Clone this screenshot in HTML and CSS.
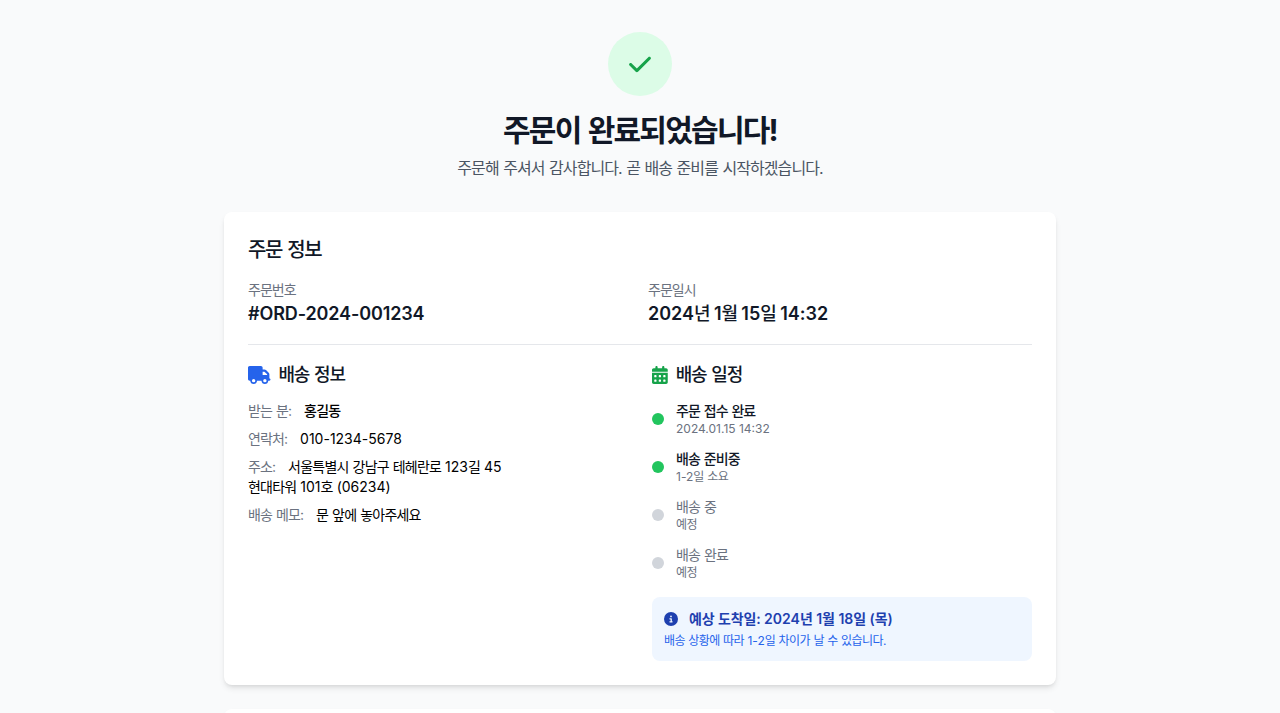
FILE: index.html
```html
<!DOCTYPE html>
<html lang="ko">
<head>
    <meta charset="UTF-8">
    <meta name="viewport" content="width=device-width, initial-scale=1.0">
    <title>주문 완료</title>
    <link rel="stylesheet" href="styles.css">
</head>
<body>

    <div class="container">
        <!-- 상단 완료 메시지 -->
        <div class="header">
            <div class="check-circle">
                <svg class="check-icon" viewBox="0 0 448 512"><path d="M438.6 105.4c12.5 12.5 12.5 32.8 0 45.3l-256 256c-12.5 12.5-32.8 12.5-45.3 0l-128-128c-12.5-12.5-12.5-32.8 0-45.3s32.8-12.5 45.3 0L160 338.7 393.4 105.4c12.5-12.5 32.8-12.5 45.3 0z"/></svg>
            </div>
            <h1>주문이 완료되었습니다!</h1>
            <p>주문해 주셔서 감사합니다. 곧 배송 준비를 시작하겠습니다.</p>
        </div>

        <!-- 주문 정보 -->
        <div class="card">
            <h2>주문 정보</h2>
            <div class="order-grid">
                <div>
                    <div class="order-label">주문번호</div>
                    <div class="order-value order-no">#ORD-2024-001234</div>
                </div>
                <div>
                    <div class="order-label">주문일시</div>
                    <div class="order-value"><span class="lat">2024</span>년 <span class="lat">1</span>월 <span class="lat">15</span>일 <span class="lat">14:32</span></div>
                </div>
            </div>

            <div class="detail-grid">
                <!-- 배송 정보 -->
                <div>
                    <h3>
                        <svg class="section-icon blue" viewBox="0 0 640 512"><path d="M48 0C21.5 0 0 21.5 0 48V368c0 26.5 21.5 48 48 48H64c0 53 43 96 96 96s96-43 96-96H384c0 53 43 96 96 96s96-43 96-96h32c17.7 0 32-14.3 32-32s-14.3-32-32-32V288 256 237.3c0-17-6.7-33.3-18.7-45.3L512 114.7c-12-12-28.3-18.7-45.3-18.7H416V48c0-26.5-21.5-48-48-48H48zM416 160h50.7L544 237.3V256H416V160zM112 416a48 48 0 1 1 96 0 48 48 0 1 1 -96 0zm368-48a48 48 0 1 1 0 96 48 48 0 1 1 0-96z"/></svg>
                        <span>배송 정보</span>
                    </h3>
                    <div class="ship-info">
                        <p><span class="ship-label">받는 분:</span> <span class="name">홍길동</span></p>
                        <p><span class="ship-label">연락처:</span> <span class="lat">010-1234-5678</span></p>
                        <p><span class="ship-label">주소:</span> 서울특별시 강남구 테헤란로 <span class="lat">123</span>길 <span class="lat">45</span><br>현대타워 <span class="lat">101</span>호 <span class="lat">(06234)</span></p>
                        <p><span class="ship-label">배송 메모:</span> 문 앞에 놓아주세요</p>
                    </div>
                </div>

                <!-- 배송 일정 -->
                <div>
                    <h3>
                        <svg class="section-icon green" viewBox="0 0 448 512"><path d="M128 0c17.7 0 32 14.3 32 32V64H288V32c0-17.7 14.3-32 32-32s32 14.3 32 32V64h48c26.5 0 48 21.5 48 48v48H0V112C0 85.5 21.5 64 48 64H96V32c0-17.7 14.3-32 32-32zM0 192H448V464c0 26.5-21.5 48-48 48H48c-26.5 0-48-21.5-48-48V192zm64 80v32c0 8.8 7.2 16 16 16h32c8.8 0 16-7.2 16-16V272c0-8.8-7.2-16-16-16H80c-8.8 0-16 7.2-16 16zm128 0v32c0 8.8 7.2 16 16 16h32c8.8 0 16-7.2 16-16V272c0-8.8-7.2-16-16-16H208c-8.8 0-16 7.2-16 16zm144-16c-8.8 0-16 7.2-16 16v32c0 8.8 7.2 16 16 16h32c8.8 0 16-7.2 16-16V272c0-8.8-7.2-16-16-16H336zM64 400v32c0 8.8 7.2 16 16 16h32c8.8 0 16-7.2 16-16V400c0-8.8-7.2-16-16-16H80c-8.8 0-16 7.2-16 16zm144-16c-8.8 0-16 7.2-16 16v32c0 8.8 7.2 16 16 16h32c8.8 0 16-7.2 16-16V400c0-8.8-7.2-16-16-16H208zm112 16v32c0 8.8 7.2 16 16 16h32c8.8 0 16-7.2 16-16V400c0-8.8-7.2-16-16-16H336c-8.8 0-16 7.2-16 16z"/></svg>
                        <span>배송 일정</span>
                    </h3>
                    <div class="timeline">
                        <div class="step done">
                            <span class="dot"></span>
                            <div>
                                <div class="step-title">주문 접수 완료</div>
                                <div class="step-sub"><span class="lat">2024.01.15 14:32</span></div>
                            </div>
                        </div>
                        <div class="step done">
                            <span class="dot"></span>
                            <div>
                                <div class="step-title">배송 준비중</div>
                                <div class="step-sub"><span class="lat">1-2</span>일 소요</div>
                            </div>
                        </div>
                        <div class="step">
                            <span class="dot"></span>
                            <div>
                                <div class="step-title">배송 중</div>
                                <div class="step-sub">예정</div>
                            </div>
                        </div>
                        <div class="step">
                            <span class="dot"></span>
                            <div>
                                <div class="step-title">배송 완료</div>
                                <div class="step-sub">예정</div>
                            </div>
                        </div>
                    </div>
                    <div class="notice">
                        <div class="notice-title">
                            <svg class="notice-icon" viewBox="0 0 512 512"><path d="M256 512A256 256 0 1 0 256 0a256 256 0 1 0 0 512zM216 336h24V272H216c-13.3 0-24-10.7-24-24s10.7-24 24-24h48c13.3 0 24 10.7 24 24v88h8c13.3 0 24 10.7 24 24s-10.7 24-24 24H216c-13.3 0-24-10.7-24-24s10.7-24 24-24zm40-208a32 32 0 1 1 0 64 32 32 0 1 1 0-64z"/></svg>
                            <span>예상 도착일: <span class="lat">2024</span>년 <span class="lat">1</span>월 <span class="lat">18</span>일 <span class="lat">(</span>목<span class="lat">)</span></span>
                        </div>
                        <div class="notice-sub">배송 상황에 따라 <span class="lat">1-2</span>일 차이가 날 수 있습니다.</div>
                    </div>
                </div>
            </div>
        </div>

        <!-- 다음 카드 (화면 아래로 잘림) -->
        <div class="card next-card"></div>
    </div>

</body>
</html>
```

FILE: styles.css
```css
* {
    margin: 0;
    padding: 0;
    box-sizing: border-box;
}

html, body {
    height: 100vh;
    overflow: hidden;
}

/* 한글 글자폭을 좁게 맞춤, 숫자/영문은 .lat 로 되돌림 */
body {
    font-family: Inter, "Noto Sans CJK KR", sans-serif;
    background-color: #f9fafb;
    color: #000;
    letter-spacing: -1px;
    word-spacing: 1px;
}

.container {
    width: 896px;
    margin: 0 auto;
    padding: 32px;
}

.header {
    text-align: center;
    margin-bottom: 32px;
}

.check-circle {
    width: 64px;
    height: 64px;
    border-radius: 50%;
    background-color: #dcfce7;
    margin: 0 auto 16px;
    display: flex;
    align-items: center;
    justify-content: center;
}

.check-icon {
    width: 22px;
    height: 25px;
    fill: #16a34a;
}

.header h1 {
    font-size: 30px;
    line-height: 36px;
    font-weight: 700;
    color: #111827;
    letter-spacing: -1.75px;
    word-spacing: 1.75px;
    margin-bottom: 8px;
}

.header p {
    font-size: 16px;
    line-height: 24px;
    color: #4b5563;
    letter-spacing: -0.93px;
    word-spacing: 0.93px;
}

.card {
    background-color: #ffffff;
    border-radius: 8px;
    box-shadow: 0 4px 6px -1px rgba(0, 0, 0, 0.1), 0 2px 4px -2px rgba(0, 0, 0, 0.1);
    padding: 24px;
    margin-bottom: 24px;
}

.next-card {
    height: 200px;
}

.card h2 {
    font-size: 20px;
    line-height: 28px;
    font-weight: 500;
    color: #111827;
    letter-spacing: -1.4px;
    word-spacing: 1.4px;
    margin-bottom: 16px;
}

.order-grid {
    display: grid;
    grid-template-columns: 1fr 1fr;
    gap: 16px;
    padding-bottom: 16px;
    border-bottom: 1px solid #e5e7eb;
    margin-bottom: 16px;
}

.order-label {
    font-size: 14px;
    line-height: 20px;
    color: #6b7280;
}

.order-value {
    font-size: 18px;
    line-height: 28px;
    font-weight: 500;
    color: #111827;
    letter-spacing: -1.5px;
    word-spacing: 1.5px;
}

.order-value .lat {
    font-weight: 600;
}

.order-value.order-no {
    font-weight: 600;
    letter-spacing: -0.13px;
}

.detail-grid {
    display: grid;
    grid-template-columns: 1fr 1fr;
    gap: 24px;
}

.card h3 {
    display: flex;
    align-items: center;
    font-size: 18px;
    line-height: 28px;
    font-weight: 500;
    color: #111827;
    letter-spacing: -1.2px;
    word-spacing: 1.2px;
    margin-bottom: 12px;
}

.section-icon {
    height: 18px;
    margin-right: 8px;
}

.section-icon.blue {
    width: 22.5px;
    fill: #2563eb;
}

.section-icon.green {
    width: 15.75px;
    fill: #16a34a;
}

.ship-info p {
    font-size: 14px;
    line-height: 20px;
    margin-bottom: 8px;
    letter-spacing: -0.78px;
    word-spacing: 0.78px;
}

.ship-label {
    color: #6b7280;
    margin-right: 9px;
    letter-spacing: -0.88px;
    word-spacing: 0.88px;
}

.name {
    font-weight: 500;
}

.step {
    display: flex;
    align-items: center;
    margin-bottom: 12px;
}

.step:last-child {
    margin-bottom: 0;
}

.dot {
    width: 12px;
    height: 12px;
    border-radius: 50%;
    background-color: #d1d5db;
    margin-right: 12px;
    flex-shrink: 0;
}

.step.done .dot {
    background-color: #22c55e;
}

.step-title {
    font-size: 14px;
    line-height: 20px;
    color: #6b7280;
    letter-spacing: -0.9px;
    word-spacing: 0.9px;
}

.step.done .step-title {
    font-weight: 500;
    color: #111827;
}

.step-sub {
    font-size: 12px;
    line-height: 16px;
    color: #6b7280;
    letter-spacing: -0.48px;
    word-spacing: 0.48px;
}

.notice {
    background-color: #eff6ff;
    border-radius: 8px;
    padding: 12px;
    margin-top: 16px;
}

.notice-title {
    display: flex;
    align-items: center;
    font-size: 14px;
    line-height: 20px;
    font-weight: 600;
    color: #1e40af;
    letter-spacing: -0.14px;
    word-spacing: 0.14px;
}

.notice-icon {
    width: 14px;
    height: 14px;
    fill: #1e40af;
    margin-right: 11px;
}

.notice-sub {
    font-size: 12px;
    line-height: 16px;
    color: #2563eb;
    margin-top: 4px;
    letter-spacing: -0.57px;
    word-spacing: 0.57px;
}

/* 숫자, 영문은 기본 자간 */
.lat {
    letter-spacing: 0;
    word-spacing: 0;
}
```
